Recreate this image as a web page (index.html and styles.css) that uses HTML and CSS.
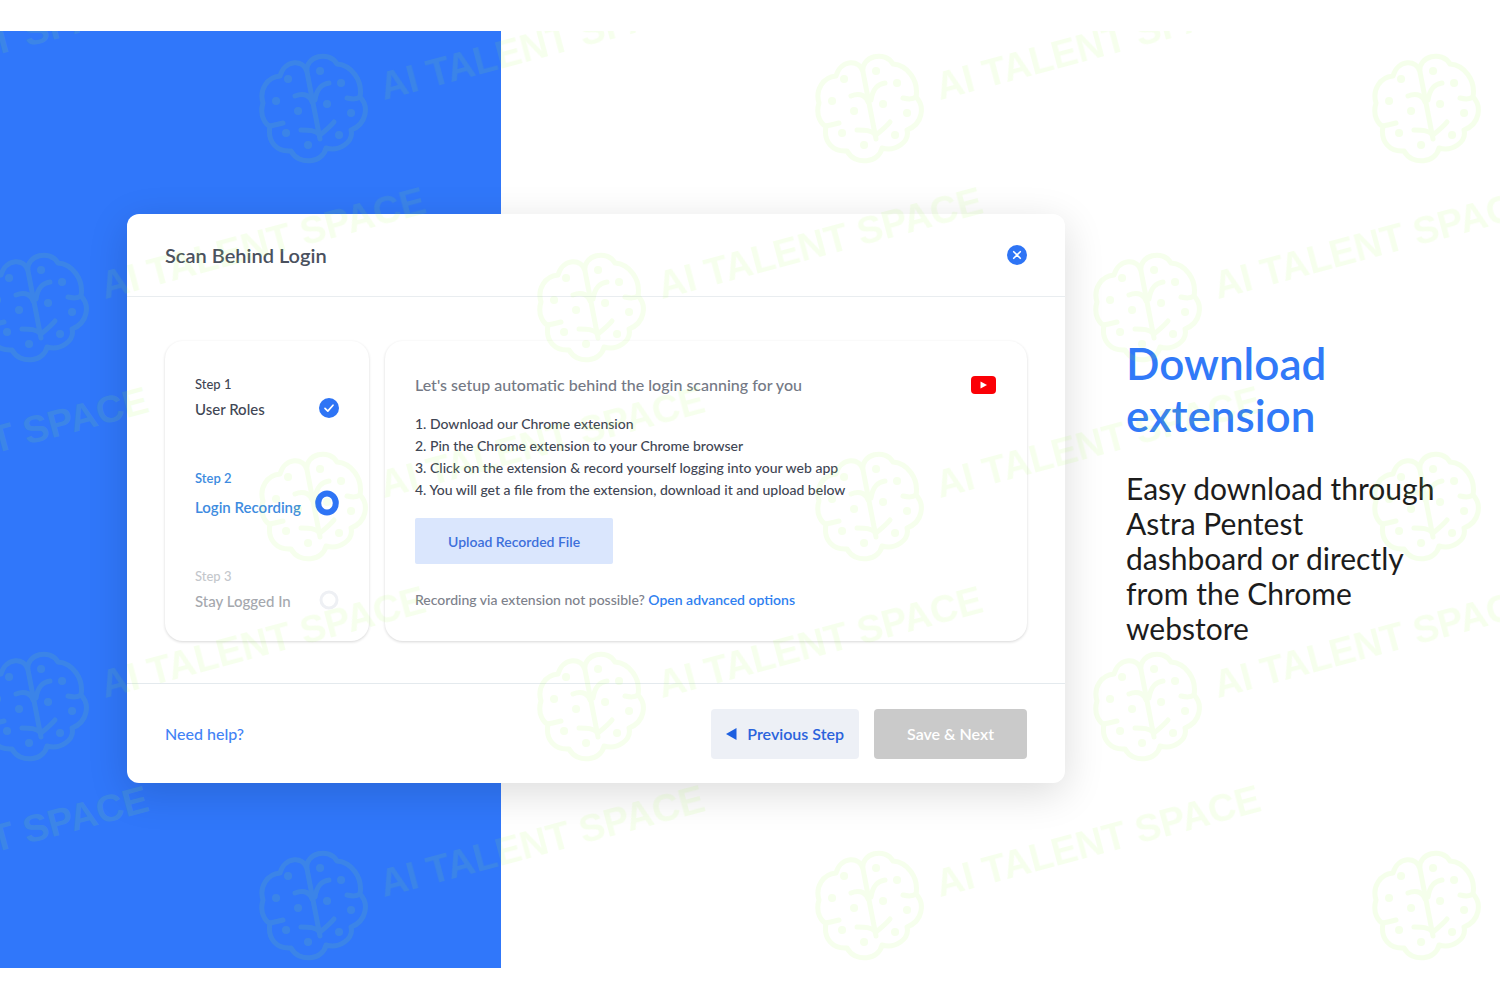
FILE: index.html
```html
<!DOCTYPE html>
<html lang="en">
<head>
<meta charset="utf-8">
<meta name="viewport" content="width=device-width, initial-scale=1">
<title>Scan Behind Login</title>
<link rel="stylesheet" href="styles.css">
</head>
<body>
<main class="stage">
  <section class="card" aria-labelledby="card-title">
    <header class="card-head">
      <h1 class="card-title" id="card-title">Scan Behind Login</h1>
      <button class="close" type="button" aria-label="Close">
        <svg width="20" height="20" viewBox="0 0 20 20"><circle cx="10" cy="10" r="10" fill="#2e74f5"/><path d="M6.7 6.7l6.6 6.6M13.3 6.7l-6.6 6.6" stroke="#fff" stroke-width="1.6" stroke-linecap="round"/></svg>
      </button>
    </header>

    <div class="card-body">
      <ol class="panel steps">
        <li class="step">
          <div class="step-text"><span class="step-no">Step 1</span><span class="step-name">User Roles</span></div>
          <svg class="step-icon" width="20" height="20" viewBox="0 0 20 20"><circle cx="10" cy="10" r="10" fill="#2e74f5"/><path d="M6 10.4l2.8 2.7L14 7.2" fill="none" stroke="#fff" stroke-width="1.7" stroke-linecap="round" stroke-linejoin="round"/></svg>
        </li>
        <li class="step step-current" aria-current="step">
          <div class="step-text"><span class="step-no">Step 2</span><span class="step-name">Login Recording</span></div>
          <svg class="step-icon" width="24" height="26" viewBox="0 0 24 26"><ellipse cx="12" cy="13" rx="8.8" ry="9.6" fill="#fff" stroke="#2e74f5" stroke-width="6"/></svg>
        </li>
        <li class="step step-todo">
          <div class="step-text"><span class="step-no">Step 3</span><span class="step-name">Stay Logged In</span></div>
          <svg class="step-icon" width="20" height="20" viewBox="0 0 20 20"><circle cx="10" cy="10" r="8" fill="#fff" stroke="#eef0f4" stroke-width="3"/></svg>
        </li>
      </ol>

      <div class="panel setup">
        <div class="setup-head">
          <h2 class="setup-title">Let's setup automatic behind the login scanning for you</h2>
          <a class="video" href="#video" aria-label="Watch the video">
            <svg width="26" height="20" viewBox="0 0 26 20"><rect x="0" y="1" width="25" height="18" rx="4" fill="#fb0006"/><path d="M9.500 6.500l6.500 3.500-6.500 3.500z" fill="#fff"/></svg>
          </a>
        </div>
        <ol class="guide">
          <li>1. Download our Chrome extension</li>
          <li>2. Pin the Chrome extension to your Chrome browser</li>
          <li>3. Click on the extension &amp; record yourself logging into your web app</li>
          <li>4. You will get a file from the extension, download it and upload below</li>
        </ol>
        <button class="upload" type="button">Upload Recorded File</button>
        <p class="note">Recording via extension not possible? <a class="note-link" href="#advanced">Open advanced options</a></p>
      </div>
    </div>

    <footer class="card-foot">
      <a class="help" href="#help">Need help?</a>
      <button class="btn btn-prev" type="button">
        <svg width="11" height="12" viewBox="0 0 11 12"><path d="M0 6L10.500 0v12z" fill="#1c5fe0"/></svg>
        Previous Step
      </button>
      <button class="btn btn-next" type="button" disabled>Save &amp; Next</button>
    </footer>
  </section>

  <aside class="caption">
    <h2 class="caption-title">Download extension</h2>
    <p class="caption-text">Easy download through Astra Pentest dashboard or directly from the Chrome webstore</p>
  </aside>

  <svg class="marks" aria-hidden="true">
    <defs>
      <g id="brain" fill="none" stroke-width="5" stroke-linecap="round" stroke-linejoin="round">
        <path d="M-6-36C-9-49-28-49-33-32C-46-31-54-18-50-5C-54 8-47 17-43 18C-46 34-36 44-22 43C-14 58 10 55 13 40C26 44 41 34 38 22C54 16 56-2 47-11C50-28 38-43 24-44C16-58-8-52-6-36L7 31"/>
        <path d="M-18-12C-8-16-2-11-1-6M47-11C43-8 38-9 34-10M-43 18C-38 17-34 16-30 15M2-8C4-20 9-24 16-25M7 27C12 23 17 19 21 14M-12 22C-4 22 2 22 7 27"/>
        <path d="M-25-29h.1M7-37h.1M28-25h.1M-37-7h.1M-15 3h.1M14-4h.1M38 5h.1M-27 25h.1M-5 37h.1M26 27h.1" stroke-width="8"/>
      </g>
    </defs>
    <g class="mark" transform="translate(-243 77)"><text x="72" y="-8" transform="rotate(-15 72 -4)">AI TALENT SPACE</text></g>
    <g class="mark" transform="translate(313 77)"><use href="#brain"/><text x="72" y="-8" transform="rotate(-15 72 -4)">AI TALENT SPACE</text></g>
    <g class="mark" transform="translate(869 77)"><use href="#brain"/><text x="72" y="-8" transform="rotate(-15 72 -4)">AI TALENT SPACE</text></g>
    <g class="mark" transform="translate(1426 77)"><use href="#brain"/></g>
    <g class="mark" transform="translate(34 276)"><use href="#brain"/><text x="72" y="-8" transform="rotate(-15 72 -4)">AI TALENT SPACE</text></g>
    <g class="mark" transform="translate(591 276)"><use href="#brain"/><text x="72" y="-8" transform="rotate(-15 72 -4)">AI TALENT SPACE</text></g>
    <g class="mark" transform="translate(1147 276)"><use href="#brain"/><text x="72" y="-8" transform="rotate(-15 72 -4)">AI TALENT SPACE</text></g>
    <g class="mark" transform="translate(-243 475)"><text x="72" y="-8" transform="rotate(-15 72 -4)">AI TALENT SPACE</text></g>
    <g class="mark" transform="translate(313 475)"><use href="#brain"/><text x="72" y="-8" transform="rotate(-15 72 -4)">AI TALENT SPACE</text></g>
    <g class="mark" transform="translate(869 475)"><use href="#brain"/><text x="72" y="-8" transform="rotate(-15 72 -4)">AI TALENT SPACE</text></g>
    <g class="mark" transform="translate(1426 475)"><use href="#brain"/></g>
    <g class="mark" transform="translate(34 675)"><use href="#brain"/><text x="72" y="-8" transform="rotate(-15 72 -4)">AI TALENT SPACE</text></g>
    <g class="mark" transform="translate(591 675)"><use href="#brain"/><text x="72" y="-8" transform="rotate(-15 72 -4)">AI TALENT SPACE</text></g>
    <g class="mark" transform="translate(1147 675)"><use href="#brain"/><text x="72" y="-8" transform="rotate(-15 72 -4)">AI TALENT SPACE</text></g>
    <g class="mark" transform="translate(-243 874)"><text x="72" y="-8" transform="rotate(-15 72 -4)">AI TALENT SPACE</text></g>
    <g class="mark" transform="translate(313 874)"><use href="#brain"/><text x="72" y="-8" transform="rotate(-15 72 -4)">AI TALENT SPACE</text></g>
    <g class="mark" transform="translate(869 874)"><use href="#brain"/><text x="72" y="-8" transform="rotate(-15 72 -4)">AI TALENT SPACE</text></g>
    <g class="mark" transform="translate(1426 874)"><use href="#brain"/></g>
  </svg>
</main>
</body>
</html>
```
FILE: styles.css
```css
* {
  box-sizing: border-box;
}

body {
  margin: 0;
  padding: 31px 0 32px;
  background: #fff;
  font-family: Lato, "Open Sans", sans-serif;
  color: #3f4654;
}

h1, h2, p, ol {
  margin: 0;
  padding: 0;
}

ol {
  list-style: none;
}

a {
  text-decoration: none;
}

button {
  border: 0;
  font: inherit;
  cursor: pointer;
}

svg {
  display: block;
}

.stage {
  position: relative;
  display: flex;
  align-items: center;
  gap: 61px;
  min-height: calc(100vh - 63px);
  padding: 0 60px 2px 127px;
  background: linear-gradient(90deg, #3077fa 33.4%, #fff 33.4%);
}

.card {
  flex: 1;
  background: #fff;
  border-radius: 12px;
  box-shadow: 0 10px 40px rgba(0, 0, 0, 0.14);
}

.card-head {
  display: flex;
  align-items: center;
  justify-content: space-between;
  height: 83px;
  padding: 0 38px;
  border-bottom: 1px solid #e9edf0;
}

.card-title {
  font-size: 20px;
  line-height: 24px;
  font-weight: 600;
  color: #4a515e;
}

.close {
  padding: 0;
  background: none;
}

.card-body {
  display: flex;
  gap: 16px;
  padding: 44px 38px 42px;
}

.panel {
  min-height: 300px;
  border-radius: 18px;
  box-shadow: 0 1px 3px rgba(0, 0, 0, 0.16);
}

.steps {
  display: flex;
  flex-direction: column;
  justify-content: space-between;
  flex: 0 0 204px;
  padding: 31px 30px 27px;
}

.step {
  display: flex;
  align-items: flex-end;
  justify-content: space-between;
  font-size: 15px;
  line-height: 25px;
  font-weight: 500;
  color: #3f4654;
}

.step-text {
  display: flex;
  flex-direction: column;
  white-space: nowrap;
}

.step-no {
  font-size: 13px;
}

.step-icon {
  flex: none;
  margin-bottom: 4px;
}

.step-current {
  color: #3d8be0;
  font-weight: 600;
}

.step-current .step-text {
  gap: 4px;
}

.step-todo {
  color: #a5a8ae;
}

.step-todo .step-no {
  color: #c4c7cc;
}

.setup {
  flex: 1;
  padding: 32px 30px 24px;
}

.setup-head {
  display: flex;
  align-items: center;
  justify-content: space-between;
  margin-bottom: 16px;
}

.setup-title {
  font-size: 16px;
  line-height: 24px;
  font-weight: 500;
  color: #747985;
}

.guide {
  font-size: 14px;
  line-height: 22px;
  font-weight: 500;
}

.upload {
  display: block;
  height: 46px;
  margin: 17px 0 24px;
  padding: 0 33px;
  border-radius: 2px;
  background: #dae6fd;
  font-size: 14px;
  font-weight: 600;
  color: #3d6fdb;
}

.note {
  font-size: 14px;
  line-height: 24px;
  font-weight: 500;
  color: #7d818b;
}

.note-link {
  font-weight: 600;
  color: #2f80f0;
}

.card-foot {
  display: flex;
  align-items: center;
  gap: 15px;
  height: 100px;
  padding: 0 38px;
  border-top: 1px solid #e4eaee;
}

.help {
  margin-right: auto;
  font-size: 16px;
  font-weight: 500;
  color: #4383f5;
}

.btn {
  display: flex;
  align-items: center;
  justify-content: center;
  gap: 10px;
  height: 50px;
  border-radius: 4px;
  font-size: 16px;
  font-weight: 600;
}

.btn-prev {
  padding: 0 15px;
  background: #edf0f6;
  color: #2a63dc;
}

.btn-next {
  padding: 0 33px;
  background: #cacaca;
  color: #fff;
}

.caption {
  flex: 0 0 314px;
  padding-bottom: 14px;
}

.caption-title {
  margin-bottom: 30px;
  font-size: 44px;
  line-height: 52px;
  font-weight: 600;
  color: #3179f8;
}

.caption-text {
  font-size: 30px;
  line-height: 35px;
  color: #1c1c1c;
}

.marks {
  position: absolute;
  inset: 0;
  width: 100%;
  height: 100%;
  overflow: hidden;
  pointer-events: none;
}

.mark {
  opacity: 0.1;
  stroke: #a6ff48;
}

.mark text {
  font: 700 38px "Liberation Sans", sans-serif;
  fill: #a6ff48;
  stroke: none;
}
```
